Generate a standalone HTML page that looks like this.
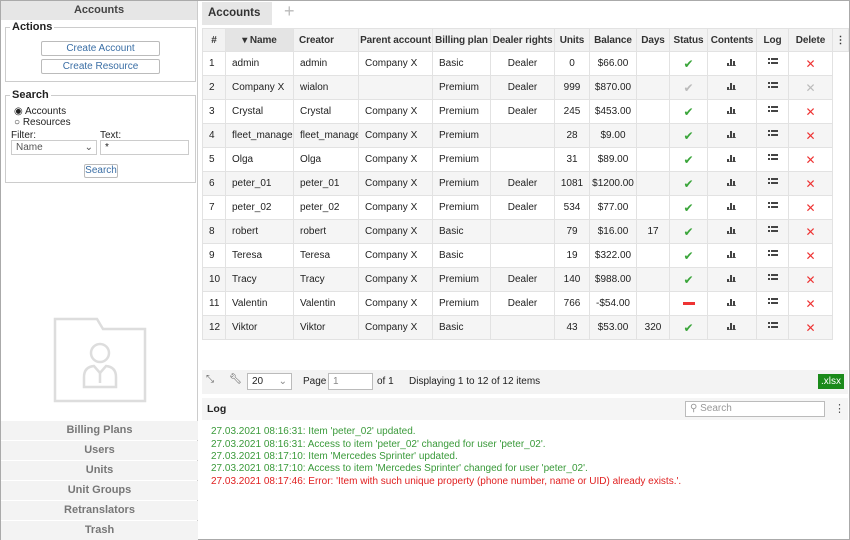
<!DOCTYPE html>
<html><head><style>
*{box-sizing:border-box;margin:0;padding:0}
body{width:850px;height:540px;font-family:"Liberation Sans",sans-serif;font-size:11px;color:#222;background:#fff;position:relative;overflow:hidden}
.frame{position:absolute;left:0;top:0;width:850px;height:540px;border:1px solid #aaa}
.left{position:absolute;left:1px;top:1px;width:197px;height:538px;background:#fff;border-right:1px solid #ccc}
.lh{height:19px;background:#e6e6e6;text-align:center;font-weight:bold;color:#444;line-height:19px}
.fs{position:absolute;left:4px;width:191px;border:1px solid #ccc;}
.fl{position:absolute;top:-7px;left:4px;background:#fff;padding:0 2px;font-weight:bold;font-size:11px;line-height:12px}
.btn{position:absolute;border:1px solid #bbb;background:#fff;color:#3a6ea5;text-align:center;font-size:10px;border-radius:2px}
.nav{position:absolute;left:0;width:197px;height:19px;background:#f3f3f3;color:#777;font-weight:bold;text-align:center;line-height:19px}
.tabs{position:absolute;left:200px;top:1px;width:649px;height:25px}
.tab{position:absolute;left:2px;top:1px;width:70px;height:23px;background:#e6e6e6;font-weight:bold;font-size:11.5px;line-height:23px;padding-left:6px;color:#333}
table{position:absolute;left:202px;top:28px;border-collapse:collapse;font-size:10px;table-layout:fixed;width:646px}
td,th{border:1px solid #e2e2e2;height:24px;padding:0 0 0 6px;white-space:nowrap;overflow:hidden}
th{height:23px;background:#f2f2f2;font-weight:bold;color:#333;text-align:center;padding:0;font-size:10px;letter-spacing:-0.1px}
tr:nth-child(odd) td{background:#f5f5f5}
.c{text-align:center;padding:0}
.ok{color:#3aa53a;font-size:12px}.okg{color:#bbb;font-size:12px}
.x{color:#e33;font-size:12px}.xg{color:#bbb;font-size:12px}
.tb{position:absolute;left:202px;top:370px;width:646px;height:24px;background:#f3f3f3;font-size:10px}
.logh{position:absolute;left:202px;top:398px;width:646px;height:22px;background:#f5f5f5}
.ll{position:absolute;left:211px;font-size:10px}
.g{color:#3a9a3a}.red{color:#e02020}
</style></head><body>
<svg width="0" height="0" style="position:absolute"><defs>
<symbol id="bar" viewBox="0 0 10 8"><rect x="0" y="5" width="2" height="3" fill="#444"/><rect x="3" y="1" width="2" height="7" fill="#444"/><rect x="6" y="3" width="2" height="5" fill="#444"/><rect x="0" y="7.3" width="9" height="0.7" fill="#444"/></symbol>
<symbol id="lst" viewBox="0 0 10 8"><rect x="0" y="0" width="2" height="2" fill="#444"/><rect x="3" y="0" width="7" height="2" fill="#444"/><rect x="0" y="4" width="2" height="2" fill="#444"/><rect x="3" y="4" width="7" height="2" fill="#444"/></symbol>
</defs></svg>
<div class="frame"></div>
<div class="left">
<div class="lh">Accounts</div>
<div class="fs" style="top:26px;height:55px"><span class="fl">Actions</span>
<div class="btn" style="left:35px;top:13px;width:119px;height:15px;line-height:13px">Create Account</div>
<div class="btn" style="left:35px;top:31px;width:119px;height:15px;line-height:13px">Create Resource</div>
</div>
<div class="fs" style="top:94px;height:88px"><span class="fl">Search</span>
<div style="position:absolute;left:8px;top:10px;font-size:10px;line-height:11px">◉ Accounts<br>○ Resources</div>
<div style="position:absolute;left:5px;top:34px;font-size:10px">Filter:</div>
<div style="position:absolute;left:94px;top:34px;font-size:10px">Text:</div>
<div style="position:absolute;left:5px;top:44px;width:86px;height:15px;border:1px solid #ccc;font-size:10px;padding-left:4px;color:#555;line-height:13px">Name<span style="float:right;padding-right:3px">⌄</span></div>
<div style="position:absolute;left:94px;top:44px;width:89px;height:15px;border:1px solid #ccc;font-size:10px;padding-left:4px;line-height:13px">*</div>
<div class="btn" style="left:78px;top:68px;width:34px;height:14px;line-height:12px">Search</div>
</div>
<svg style="position:absolute;left:50px;top:316px" width="98" height="86" viewBox="0 0 98 86" fill="none" stroke="#ddd" stroke-width="2.5">
<path d="M4 2 H46 L52 12 H94 V84 H4 Z"/>
<circle cx="49" cy="36" r="9"/><path d="M33 70 V60 Q33 50 43 49 L49 56 L55 49 Q65 50 65 60 V70 Z"/><path d="M49 56 V66"/></svg>
<div class="nav" style="top:420px">Billing Plans</div>
<div class="nav" style="top:440px">Users</div>
<div class="nav" style="top:460px">Units</div>
<div class="nav" style="top:480px">Unit Groups</div>
<div class="nav" style="top:500px">Retranslators</div>
<div class="nav" style="top:520px">Trash</div>
</div>
<div class="tabs"><div class="tab">Accounts &nbsp;✕</div><div style="position:absolute;left:84px;top:0;font-size:18px;color:#bbb">+</div></div>
<table>
<colgroup><col style="width:23px"><col style="width:68px"><col style="width:65px"><col style="width:74px"><col style="width:58px"><col style="width:64px"><col style="width:35px"><col style="width:47px"><col style="width:33px"><col style="width:38px"><col style="width:49px"><col style="width:32px"><col style="width:44px"><col style="width:16px"></colgroup>
<tr><th>#</th><th style="background:#e4e4e4">▾ Name</th><th style="text-align:left;padding-left:5px">Creator</th><th>Parent account</th><th>Billing plan</th><th>Dealer rights</th><th>Units</th><th>Balance</th><th>Days</th><th>Status</th><th>Contents</th><th>Log</th><th>Delete</th><th>⋮</th></tr>
<tr><td>1</td><td>admin</td><td>admin</td><td>Company X</td><td>Basic</td><td class="c">Dealer</td><td class="c">0</td><td class="c">$66.00</td><td></td><td class="c ok">✔</td><td class="c"><svg width="10" height="8"><use href="#bar"/></svg></td><td class="c"><svg width="10" height="8"><use href="#lst"/></svg></td><td class="c x">✕</td><td style="border:none;background:#fff"></td></tr>
<tr><td>2</td><td>Company X</td><td>wialon</td><td></td><td>Premium</td><td class="c">Dealer</td><td class="c">999</td><td class="c">$870.00</td><td></td><td class="c okg">✔</td><td class="c"><svg width="10" height="8"><use href="#bar"/></svg></td><td class="c"><svg width="10" height="8"><use href="#lst"/></svg></td><td class="c xg">✕</td><td style="border:none;background:#fff"></td></tr>
<tr><td>3</td><td>Crystal</td><td>Crystal</td><td>Company X</td><td>Premium</td><td class="c">Dealer</td><td class="c">245</td><td class="c">$453.00</td><td></td><td class="c ok">✔</td><td class="c"><svg width="10" height="8"><use href="#bar"/></svg></td><td class="c"><svg width="10" height="8"><use href="#lst"/></svg></td><td class="c x">✕</td><td style="border:none;background:#fff"></td></tr>
<tr><td>4</td><td>fleet_manager</td><td>fleet_manager</td><td>Company X</td><td>Premium</td><td></td><td class="c">28</td><td class="c">$9.00</td><td></td><td class="c ok">✔</td><td class="c"><svg width="10" height="8"><use href="#bar"/></svg></td><td class="c"><svg width="10" height="8"><use href="#lst"/></svg></td><td class="c x">✕</td><td style="border:none;background:#fff"></td></tr>
<tr><td>5</td><td>Olga</td><td>Olga</td><td>Company X</td><td>Premium</td><td></td><td class="c">31</td><td class="c">$89.00</td><td></td><td class="c ok">✔</td><td class="c"><svg width="10" height="8"><use href="#bar"/></svg></td><td class="c"><svg width="10" height="8"><use href="#lst"/></svg></td><td class="c x">✕</td><td style="border:none;background:#fff"></td></tr>
<tr><td>6</td><td>peter_01</td><td>peter_01</td><td>Company X</td><td>Premium</td><td class="c">Dealer</td><td class="c">1081</td><td class="c">$1200.00</td><td></td><td class="c ok">✔</td><td class="c"><svg width="10" height="8"><use href="#bar"/></svg></td><td class="c"><svg width="10" height="8"><use href="#lst"/></svg></td><td class="c x">✕</td><td style="border:none;background:#fff"></td></tr>
<tr><td>7</td><td>peter_02</td><td>peter_02</td><td>Company X</td><td>Premium</td><td class="c">Dealer</td><td class="c">534</td><td class="c">$77.00</td><td></td><td class="c ok">✔</td><td class="c"><svg width="10" height="8"><use href="#bar"/></svg></td><td class="c"><svg width="10" height="8"><use href="#lst"/></svg></td><td class="c x">✕</td><td style="border:none;background:#fff"></td></tr>
<tr><td>8</td><td>robert</td><td>robert</td><td>Company X</td><td>Basic</td><td></td><td class="c">79</td><td class="c">$16.00</td><td class="c">17</td><td class="c ok">✔</td><td class="c"><svg width="10" height="8"><use href="#bar"/></svg></td><td class="c"><svg width="10" height="8"><use href="#lst"/></svg></td><td class="c x">✕</td><td style="border:none;background:#fff"></td></tr>
<tr><td>9</td><td>Teresa</td><td>Teresa</td><td>Company X</td><td>Basic</td><td></td><td class="c">19</td><td class="c">$322.00</td><td></td><td class="c ok">✔</td><td class="c"><svg width="10" height="8"><use href="#bar"/></svg></td><td class="c"><svg width="10" height="8"><use href="#lst"/></svg></td><td class="c x">✕</td><td style="border:none;background:#fff"></td></tr>
<tr><td>10</td><td>Tracy</td><td>Tracy</td><td>Company X</td><td>Premium</td><td class="c">Dealer</td><td class="c">140</td><td class="c">$988.00</td><td></td><td class="c ok">✔</td><td class="c"><svg width="10" height="8"><use href="#bar"/></svg></td><td class="c"><svg width="10" height="8"><use href="#lst"/></svg></td><td class="c x">✕</td><td style="border:none;background:#fff"></td></tr>
<tr><td>11</td><td>Valentin</td><td>Valentin</td><td>Company X</td><td>Premium</td><td class="c">Dealer</td><td class="c">766</td><td class="c">-$54.00</td><td></td><td class="c"><svg width="12" height="4"><rect width="12" height="3" fill="#e33"/></svg></td><td class="c"><svg width="10" height="8"><use href="#bar"/></svg></td><td class="c"><svg width="10" height="8"><use href="#lst"/></svg></td><td class="c x">✕</td><td style="border:none;background:#fff"></td></tr>
<tr><td>12</td><td>Viktor</td><td>Viktor</td><td>Company X</td><td>Basic</td><td></td><td class="c">43</td><td class="c">$53.00</td><td class="c">320</td><td class="c ok">✔</td><td class="c"><svg width="10" height="8"><use href="#bar"/></svg></td><td class="c"><svg width="10" height="8"><use href="#lst"/></svg></td><td class="c x">✕</td><td style="border:none;background:#fff"></td></tr>
</table>
<div class="tb">
<span style="position:absolute;left:4px;top:4px;color:#666">⤡</span>
<span style="position:absolute;left:27px;top:4px;color:#444">🔧︎</span>
<div style="position:absolute;left:45px;top:3px;width:45px;height:17px;border:1px solid #bbb;background:#fff;padding-left:4px;line-height:15px">20<span style="float:right;padding-right:4px;color:#888">⌄</span></div>
<span style="position:absolute;left:101px;top:6px">Page</span>
<div style="position:absolute;left:126px;top:3px;width:45px;height:17px;border:1px solid #bbb;background:#fff;padding-left:4px;line-height:15px;color:#888">1</div>
<span style="position:absolute;left:175px;top:6px">of 1</span>
<span style="position:absolute;left:207px;top:6px">Displaying 1 to 12 of 12 items</span>
<div style="position:absolute;left:616px;top:4px;width:26px;height:15px;background:#1a8a1a;color:#fff;text-align:center;line-height:15px;font-size:10px">.xlsx</div>
</div>
<div class="logh"><span style="position:absolute;left:5px;top:5px;font-weight:bold;font-size:10.5px">Log</span>
<div style="position:absolute;left:483px;top:3px;width:140px;height:16px;border:1px solid #bbb;background:#fff;color:#999;padding-left:4px;line-height:14px;font-size:10px">⚲ Search</div>
<span style="position:absolute;left:632px;top:4px;color:#555">⋮</span></div>
<div class="ll g" style="top:426px">27.03.2021 08:16:31: Item 'peter_02' updated.</div>
<div class="ll g" style="top:438.5px">27.03.2021 08:16:31: Access to item 'peter_02' changed for user 'peter_02'.</div>
<div class="ll g" style="top:451px">27.03.2021 08:17:10: Item 'Mercedes Sprinter' updated.</div>
<div class="ll g" style="top:463px">27.03.2021 08:17:10: Access to item 'Mercedes Sprinter' changed for user 'peter_02'.</div>
<div class="ll red" style="top:475.5px">27.03.2021 08:17:46: Error: 'Item with such unique property (phone number, name or UID) already exists.'.</div>
</body></html>
